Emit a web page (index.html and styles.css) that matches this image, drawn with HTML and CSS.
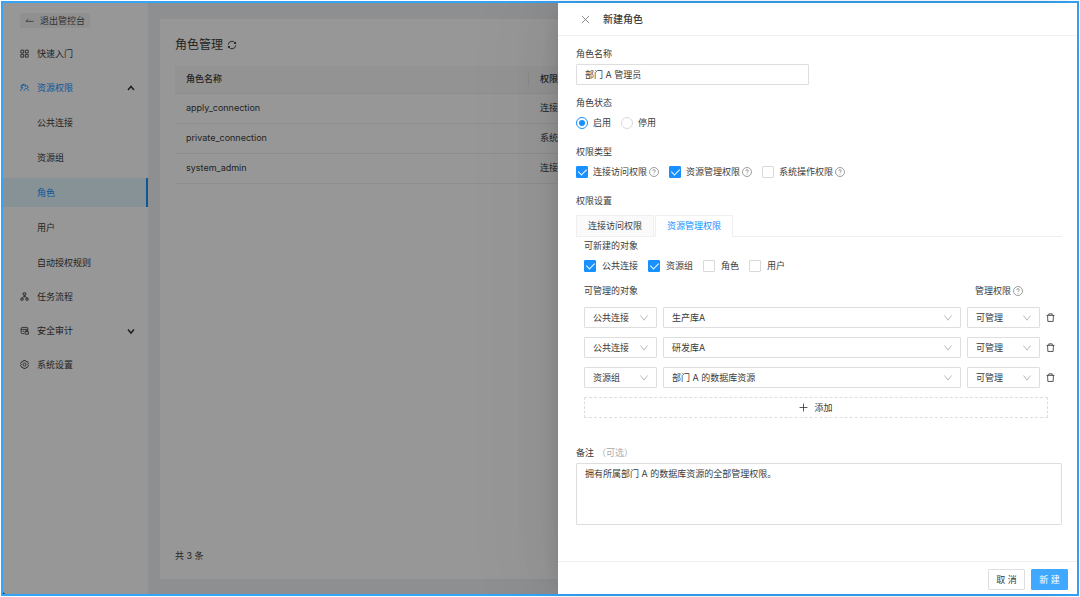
FILE: index.html
```html
<!DOCTYPE html>
<html lang="zh-CN">
<head>
  <meta charset="UTF-8">
  <meta name="viewport" content="width=device-width, initial-scale=1.0">
  <title>角色管理</title>
  <link rel="stylesheet" href="styles.css">
</head>
<body>

  <!-- Shared icons -->
  <svg class="sprite" aria-hidden="true">
    <symbol id="icon-help" viewBox="0 0 16 16">
      <circle cx="8" cy="8" r="7.2"/>
      <path d="M5.8 6.3c0-1.200 1-2 2.200-2s2.200.8 2.200 2c0 1.500-2.200 1.600-2.200 3.200M8 11v1.300"/>
    </symbol>
    <symbol id="icon-trash" viewBox="0 0 16 16">
      <path d="M1 4.200h14M5 4V1.500h6V4M2.800 4.200l.5 10.800h9.400l.5-10.800"/>
    </symbol>
  </svg>

  <div class="app">

    <!-- Sidebar -->
    <aside class="sidebar">
      <button type="button" class="exit-btn">
        <svg class="icon" viewBox="0 0 16 16"><path d="M15 9.500H1.500l4.500-4"/></svg>
        退出管控台
      </button>
      <ul class="menu">
        <li><a class="menu-item" href="#">
          <svg class="icon" viewBox="0 0 16 16"><path d="M1.500 2h5v5h-5zM9.500 2h5v5h-5zM1.500 9.500h5v5h-5zM9.500 9.500h5v5h-5z"/></svg>
          快速入门
        </a></li>
        <li><a class="menu-item open" href="#">
          <svg class="icon" viewBox="0 0 16 16"><path d="M2 9V6.500a4.500 4.500 0 0 1 8.500-2M1 14c.3-3 2-5 4.500-5.200M5.500 8.500a2.500 2.500 0 1 1 2.500-3M9 7a2.600 2.600 0 1 1 2.600 2.600C9 9.800 7.500 11.500 7 14M12 9.500c1.500 1 2.500 2.500 3 4.500"/></svg>
          资源权限
          <svg class="arrow" viewBox="0 0 10 10"><path d="M2 7l3-3.500L8 7"/></svg>
        </a>
          <ul class="submenu">
            <li><a class="menu-item" href="#">公共连接</a></li>
            <li><a class="menu-item" href="#">资源组</a></li>
            <li><a class="menu-item active" href="#">角色</a></li>
            <li><a class="menu-item" href="#">用户</a></li>
            <li><a class="menu-item" href="#">自动授权规则</a></li>
          </ul>
        </li>
        <li><a class="menu-item" href="#">
          <svg class="icon" viewBox="0 0 16 16"><path d="M5.800 1.500h4.400v4H5.800zM8 5.500v3M3.500 11l2-2.500h5l2 2.500M1.500 11h4v3.500h-4zM10.500 11h4v3.500h-4z"/></svg>
          任务流程
        </a></li>
        <li><a class="menu-item" href="#">
          <svg class="icon" viewBox="0 0 16 16"><path d="M7 13.500H4A2 2 0 0 1 2 11.500V4.500a2 2 0 0 1 2-2h8a2 2 0 0 1 2 2V7M2 6h12M4.500 9.500h3M9 10h6v4.500H9zM10.500 10V8h3v2"/></svg>
          安全审计
          <svg class="arrow" viewBox="0 0 10 10"><path d="M2 3.500L5 7l3-3.500"/></svg>
        </a></li>
        <li><a class="menu-item" href="#">
          <svg class="icon" viewBox="0 0 16 16"><path d="M6 1h4l.8 2 2.200-.2L15 6.200 13.700 8 15 9.800l-2 3.400-2.200-.2L10 15H6l-.8-2-2.200.2L1 9.800 2.300 8 1 6.200l2-3.400 2.200.2z"/><circle cx="8" cy="8" r="2.600"/></svg>
          系统设置
        </a></li>
      </ul>
    </aside>

    <!-- Role list -->
    <main class="content">
      <section class="card">
        <h1 class="card-title">
          角色管理
          <svg class="icon-refresh" viewBox="0 0 16 16"><path d="M2 7.500a6 6 0 0 1 11-2.800M14 8.500a6 6 0 0 1-11 2.800"/><path class="fill" d="M14.500 2.500v4h-4zM1.500 13.500v-4h4z"/></svg>
        </h1>
        <table class="role-table">
          <thead>
            <tr><th class="col-name">角色名称</th><th>权限描述</th></tr>
          </thead>
          <tbody>
            <tr><td>apply_connection</td><td>连接访</td></tr>
            <tr><td>private_connection</td><td>系统操</td></tr>
            <tr><td>system_admin</td><td>连接访</td></tr>
          </tbody>
        </table>
        <p class="total">共 3 条</p>
      </section>
    </main>

    <div class="mask"></div>

    <!-- New role drawer -->
    <form class="drawer">
      <header class="drawer-header">
        <button type="button" class="close-btn" aria-label="关闭">
          <svg class="icon" viewBox="0 0 16 16"><path d="M1.500 1.500l13 13M14.500 1.500l-13 13"/></svg>
        </button>
        <h2>新建角色</h2>
      </header>

      <div class="drawer-body">
        <div class="field">
          <label class="label" for="role-name">角色名称</label>
          <input type="text" id="role-name" class="text-input" value="部门 A 管理员">
        </div>

        <fieldset class="field">
          <legend class="label">角色状态</legend>
          <div class="options">
            <label class="option"><input type="radio" name="status" checked>启用</label>
            <label class="option"><input type="radio" name="status">停用</label>
          </div>
        </fieldset>

        <fieldset class="field">
          <legend class="label">权限类型</legend>
          <div class="options">
            <label class="option"><input type="checkbox" checked>连接访问权限<svg class="help"><use href="#icon-help"/></svg></label>
            <label class="option"><input type="checkbox" checked>资源管理权限<svg class="help"><use href="#icon-help"/></svg></label>
            <label class="option"><input type="checkbox">系统操作权限<svg class="help"><use href="#icon-help"/></svg></label>
          </div>
        </fieldset>

        <div class="permissions">
          <div class="label">权限设置</div>
          <div class="tabs" role="tablist">
            <button type="button" class="tab" role="tab">连接访问权限</button>
            <button type="button" class="tab selected" role="tab">资源管理权限</button>
          </div>

          <div class="tab-panel">
            <fieldset>
              <legend class="label">可新建的对象</legend>
              <div class="options">
                <label class="option"><input type="checkbox" checked>公共连接</label>
                <label class="option"><input type="checkbox" checked>资源组</label>
                <label class="option"><input type="checkbox">角色</label>
                <label class="option"><input type="checkbox">用户</label>
              </div>
            </fieldset>

            <div class="object-row object-head">
              <span class="head-object">可管理的对象</span>
              <span class="head-auth">管理权限<svg class="help"><use href="#icon-help"/></svg></span>
            </div>
            <div class="object-row">
              <select aria-label="对象类型"><option>公共连接</option></select>
              <select aria-label="对象"><option>生产库A</option></select>
              <select aria-label="管理权限"><option>可管理</option></select>
              <button type="button" class="delete-btn" aria-label="删除"><svg class="icon"><use href="#icon-trash"/></svg></button>
            </div>
            <div class="object-row">
              <select aria-label="对象类型"><option>公共连接</option></select>
              <select aria-label="对象"><option>研发库A</option></select>
              <select aria-label="管理权限"><option>可管理</option></select>
              <button type="button" class="delete-btn" aria-label="删除"><svg class="icon"><use href="#icon-trash"/></svg></button>
            </div>
            <div class="object-row">
              <select aria-label="对象类型"><option>资源组</option></select>
              <select aria-label="对象"><option>部门 A 的数据库资源</option></select>
              <select aria-label="管理权限"><option>可管理</option></select>
              <button type="button" class="delete-btn" aria-label="删除"><svg class="icon"><use href="#icon-trash"/></svg></button>
            </div>
            <button type="button" class="add-btn">
              <svg class="icon" viewBox="0 0 16 16"><path d="M8 1v14M1 8h14"/></svg>
              添加
            </button>
          </div>
        </div>

        <div class="remark">
          <label class="label" for="remark">备注<span class="optional">（可选）</span></label>
          <textarea id="remark">拥有所属部门 A 的数据库资源的全部管理权限。</textarea>
        </div>
      </div>

      <footer class="drawer-footer">
        <button type="button" class="btn">取 消</button>
        <button type="button" class="btn primary">新 建</button>
      </footer>
    </form>
  </div>

</body>
</html>
```
FILE: styles.css
```css
/* Global Styles */
* {
  box-sizing: border-box;
}

body {
  margin: 0;
  padding: 1px;
  background-color: #ffffff;
  color: #3a3a3a;
  font-family: Inter, "Noto Sans CJK SC", sans-serif;
  font-size: 9px;
  line-height: 14px;
}

h1,
h2,
p,
ul,
fieldset,
legend {
  margin: 0;
  padding: 0;
  border: none;
}

ul {
  list-style: none;
}

a {
  color: inherit;
  text-decoration: none;
}

button,
input,
select,
textarea {
  margin: 0;
  font: inherit;
  color: inherit;
}

button {
  cursor: pointer;
}

svg {
  fill: none;
  stroke: currentColor;
  stroke-width: 1.5;
  flex-shrink: 0;
}

.sprite {
  display: none;
}

.icon {
  width: 9px;
  height: 9px;
}

.app {
  position: relative;
  display: flex;
  min-height: calc(100vh - 2px);
  border: 2px solid #36a3f5;
  background-color: #0d3a66;
}

/* Sidebar */
.sidebar {
  width: 145px;
  padding-top: 10px;
  background-color: #fcfcfc;
  border-bottom-left-radius: 3px;
}

.exit-btn {
  display: flex;
  align-items: center;
  gap: 6px;
  height: 15px;
  margin-left: 17px;
  padding: 0 5px;
  border: none;
  background-color: #f0f0f0;
  color: #555555;
}

.menu {
  display: flex;
  flex-direction: column;
  gap: 5px;
  margin-top: 11px;
}

.submenu {
  display: flex;
  flex-direction: column;
  gap: 6px;
  margin-top: 6px;
}

.menu-item {
  display: flex;
  align-items: center;
  gap: 8px;
  height: 29px;
  padding: 0 12px 0 17px;
}

.submenu .menu-item {
  padding-left: 34px;
}

.menu-item.open {
  color: #1890ff;
}

.menu-item.active {
  border-right: 2px solid #1890ff;
  background-color: #dff3fb;
  color: #1890ff;
}

.arrow {
  width: 10px;
  height: 10px;
  margin-left: auto;
  color: #333333;
}

/* Role list */
.content {
  display: flex;
  flex: 1;
  padding: 16px 12px 15px 12px;
  background-color: #ebeef2;
}

.card {
  display: flex;
  flex: 1;
  flex-direction: column;
  padding: 16px 15px;
  background-color: #fcfcfc;
}

.card-title {
  display: flex;
  align-items: center;
  gap: 4px;
  height: 20px;
  font-size: 12px;
  font-weight: 400;
}

.icon-refresh {
  width: 10px;
  height: 10px;
}

.icon-refresh .fill {
  fill: currentColor;
  stroke: none;
}

.role-table {
  width: 100%;
  margin-top: 11px;
  border-collapse: collapse;
  text-align: left;
}

.role-table th,
.role-table td {
  height: 30px;
  padding: 0 11px;
  border-bottom: 1px solid #ececec;
}

.role-table th {
  height: 27px;
  background-color: #f5f5f5;
  font-weight: 500;
}

.role-table .col-name {
  width: 354px;
  background-image: linear-gradient(#e8e8e8, #e8e8e8);
  background-position: right center;
  background-repeat: no-repeat;
  background-size: 1px 14px;
}

.total {
  margin-top: auto;
}

.mask {
  position: absolute;
  inset: 0;
  background-color: rgba(0, 0, 0, 0.4);
}

/* Drawer */
.drawer {
  position: absolute;
  top: 0;
  right: 0;
  bottom: 0;
  display: flex;
  flex-direction: column;
  width: calc(50% - 18px);
  background-color: #ffffff;
  box-shadow: -6px 0 16px -8px rgba(0, 0, 0, 0.1), -9px 0 40px rgba(0, 0, 0, 0.06), -12px 0 80px 16px rgba(0, 0, 0, 0.04);
}

.drawer-header {
  display: flex;
  align-items: center;
  gap: 13px;
  height: 33px;
  padding: 0 23px;
  border-bottom: 1px solid #efefef;
}

.drawer-header h2 {
  font-size: 10px;
  font-weight: 500;
}

.close-btn {
  display: flex;
  padding: 0;
  border: none;
  background: none;
  color: #777777;
}

.drawer-body {
  display: flex;
  flex: 1;
  flex-direction: column;
  padding: 11px 15px 0 18px;
}

.label {
  display: block;
  height: 17px;
}

.field {
  height: 49px;
}

.text-input,
.drawer select,
.drawer textarea {
  height: 21px;
  padding: 0 8px;
  border: 1px solid #dedede;
  border-radius: 1px;
  background-color: #ffffff;
}

.text-input {
  display: block;
  width: 48%;
}

.options {
  display: flex;
  gap: 10px;
  padding-top: 3px;
}

.option {
  display: flex;
  align-items: center;
  gap: 5px;
}

.option input {
  display: grid;
  place-items: center;
  width: 12px;
  height: 12px;
  appearance: none;
  border: 1px solid #d9d9d9;
  border-radius: 1px;
  background-color: #ffffff;
}

.option input[type="radio"] {
  border-radius: 50%;
}

.option input:checked {
  border-color: #1890ff;
}

.option input[type="radio"]:checked::after {
  content: "";
  width: 6px;
  height: 6px;
  border-radius: 50%;
  background-color: #1890ff;
}

.option input[type="checkbox"]:checked {
  background-color: #1890ff;
}

.option input[type="checkbox"]:checked::after {
  content: "";
  width: 4px;
  height: 7px;
  margin-bottom: 2px;
  border: solid #ffffff;
  border-width: 0 1px 1px 0;
  transform: rotate(45deg);
}

.help {
  width: 10px;
  height: 10px;
  color: #888888;
  stroke-width: 1.3;
}

.option .help {
  margin-left: -3px;
}

/* Permission tabs */
.tabs {
  display: flex;
  gap: 1px;
  height: 22px;
  margin-top: 4px;
  border-bottom: 1px solid #efefef;
}

.tab {
  height: 22px;
  padding: 0 11px;
  border: 1px solid #efefef;
  border-radius: 1px 1px 0 0;
  background-color: #fafafa;
}

.tab.selected {
  border-bottom-color: #ffffff;
  background-color: #ffffff;
  color: #1890ff;
}

.tab-panel {
  padding: 2px 14px 0 8px;
}

.tab-panel .option {
  gap: 6px;
}

.object-row {
  display: grid;
  grid-template-columns: 73px 1fr 73px 9px;
  column-gap: 6px;
  align-items: center;
  margin: 0 -7px 9px 0;
}

.object-head {
  margin-top: 11px;
}

.head-object {
  grid-column: span 2;
}

.head-auth {
  display: flex;
  align-items: center;
  gap: 2px;
  padding-left: 8px;
  white-space: nowrap;
}

.drawer select {
  width: 100%;
  appearance: none;
  background-image: url("data:image/svg+xml,%3Csvg xmlns='http://www.w3.org/2000/svg' viewBox='0 0 8 8' fill='none' stroke='%23bbbbbb'%3E%3Cpath d='M.5 1.500L4 6.200 7.500 1.500'/%3E%3C/svg%3E");
  background-position: right 8px center;
  background-repeat: no-repeat;
  background-size: 8px 8px;
}

.delete-btn {
  display: flex;
  padding: 0;
  border: none;
  background: none;
}

.add-btn {
  display: flex;
  align-items: center;
  justify-content: center;
  gap: 6px;
  width: 100%;
  height: 21px;
  border: 1px dashed #dedede;
  border-radius: 1px;
  background: none;
}

/* Remark */
.remark {
  margin-top: 28px;
}

.optional {
  margin-left: 3px;
  color: #aaaaaa;
}

.drawer textarea {
  display: block;
  width: 100%;
  height: 62px;
  padding: 3px 8px;
  resize: none;
}

.drawer-footer {
  display: flex;
  align-items: center;
  justify-content: flex-end;
  gap: 6px;
  height: 33px;
  padding: 3px 9px 0;
  border-top: 1px solid #efefef;
}

.btn {
  width: 37px;
  height: 21px;
  padding: 0;
  border: 1px solid #dedede;
  border-radius: 1px;
  background-color: #ffffff;
}

.btn.primary {
  border-color: #40a9ff;
  background-color: #40a9ff;
  color: #ffffff;
}
```
